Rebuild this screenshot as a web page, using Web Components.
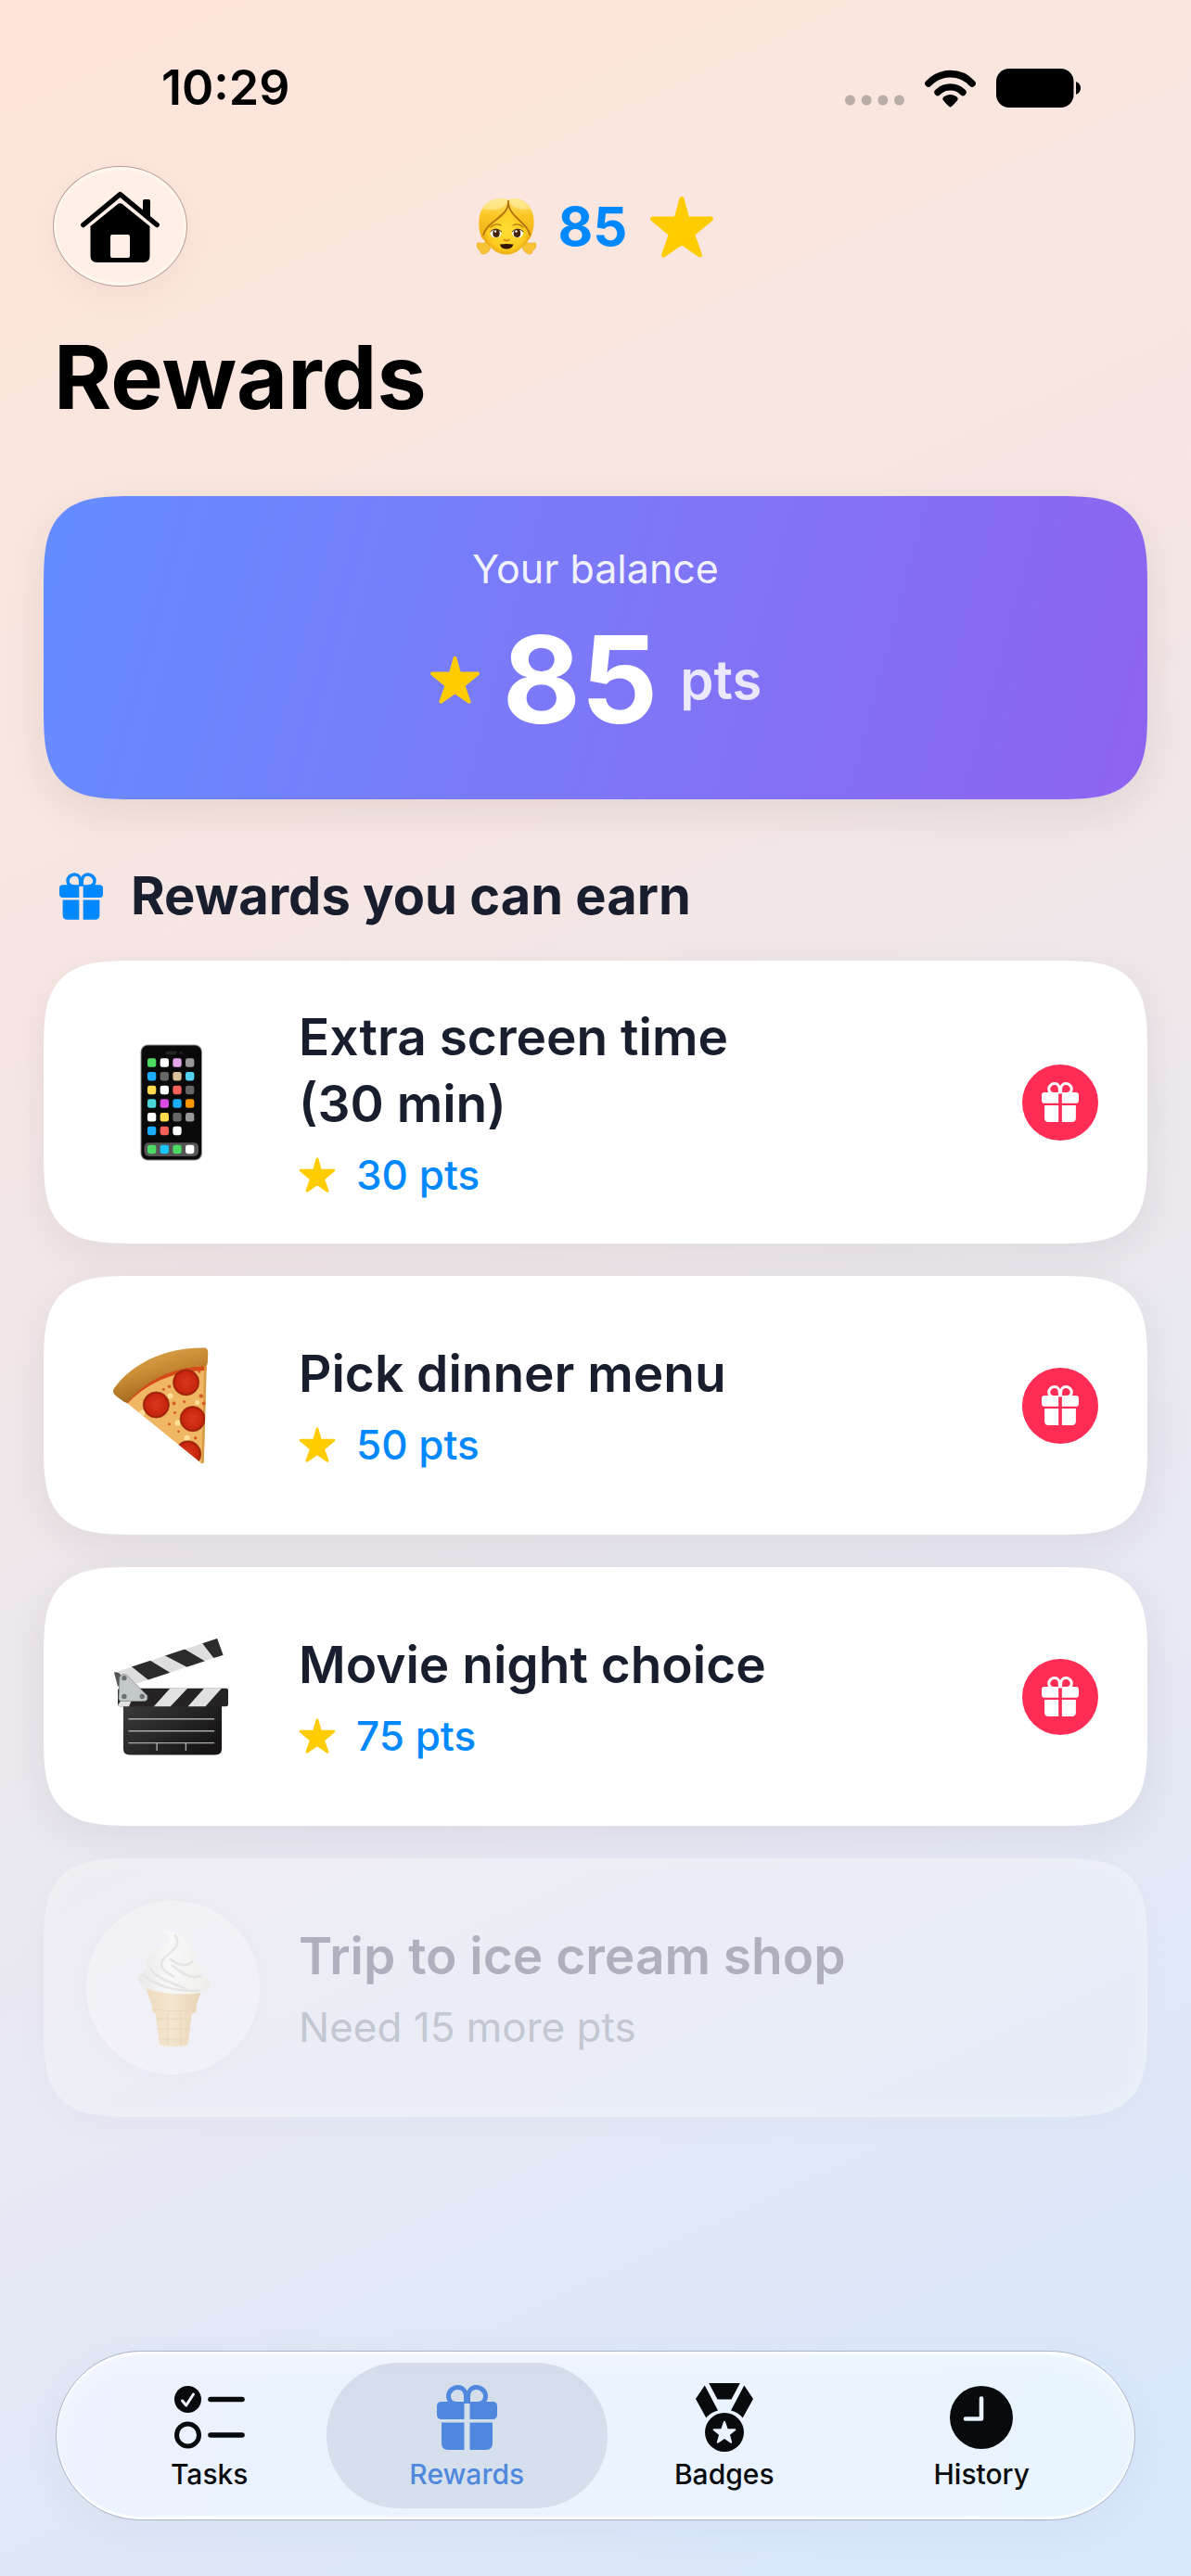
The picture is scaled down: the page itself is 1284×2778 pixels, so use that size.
<!DOCTYPE html>
<html lang="en">
<head>
<meta charset="utf-8">
<meta name="viewport" content="width=device-width, initial-scale=1">
<title>Rewards</title>
<style>
  html { background: #e6e8f3; }
  body {
    margin: 0;
    font-family: Inter, "Liberation Sans", sans-serif;
    color: #191e2e;
    --blue: #0088ff;
    --edge: 47px;
  }
</style>
</head>
<body>
<rewards-app>
  <status-bar slot="status">10:29</status-bar>
  <score-header slot="header">85</score-header>
  <balance-card>
    <span slot="label">Your balance</span>
    <span slot="value">85</span>
    <span slot="unit">pts</span>
  </balance-card>
  <section-title>Rewards you can earn</section-title>
  <reward-card art="phone"><span>Extra screen time<br>(30 min)</span><span slot="cost">30 pts</span></reward-card>
  <reward-card art="pizza"><span>Pick dinner menu</span><span slot="cost">50 pts</span></reward-card>
  <reward-card art="clapper"><span>Movie night choice</span><span slot="cost">75 pts</span></reward-card>
  <reward-card art="cone" locked><span>Trip to ice cream shop</span><span slot="cost">Need 15 more pts</span></reward-card>
  <tab-bar slot="tabs">
    <tab-item icon="tasks">Tasks</tab-item>
    <tab-item icon="gift" selected>Rewards</tab-item>
    <tab-item icon="medal">Badges</tab-item>
    <tab-item icon="clock">History</tab-item>
  </tab-bar>
</rewards-app>

<script>
const phoneApps = () => {
  const rows = [
    ['#4cd964', '#fff', '#e3a4ea', '#999'],
    ['#1badf8', '#666', '#d9bf9a', '#55d3ee'],
    ['#ffdb4d', '#fff', '#f5605a', '#666'],
    ['#4bd5da', '#d94be0', '#1badf8', '#ff9500'],
    ['#fff', '#ffdb4d', '#666', '#999'],
    ['#1badf8', '#f5605a', '#fff']
  ];
  const app = (x, y, c) => `<rect x="${x}" y="${y}" width="9.4" height="9.6" rx="2.4" fill="${c}"/>`;
  return rows.map((r, j) => r.map((c, i) => app(8 + i * 13.8, 15.4 + j * 14.8, c)).join('')).join('')
    + ['#4cd964', '#1bc5f8', '#4cd964', '#fff'].map((c, i) => app(8 + i * 13.8, 109.6, c)).join('');
};

const art = {
  star: ['0 0 70 67', `<path d="M35 3.5 41 25H66.5L46.5 41.5 54.5 64 35 50.5 15.5 64 23.5 41.5 3.5 25H29Z" fill="#ffcc00" stroke="#ffcc00" stroke-width="5" stroke-linejoin="round"/>`],
  gift: ['0 0 65 70', `<g fill="currentColor">
    <path d="M5 18H29.5V37H5Q0 37 0 32V23Q0 18 5 18ZM35.500 18H60Q65 18 65 23V32Q65 37 60 37H35.500Z"/>
    <path d="M5 40.500H29.500V70H12Q5 70 5 63ZM35.500 40.500H60V63Q60 70 53 70H35.500Z"/></g>
    <g fill="none" stroke="currentColor" stroke-width="5"><path d="M31.500 20V13C31.500 7 28 2.500 22.500 2.500S12.500 7 12.500 12 16 20.500 22 20.500"/><path d="M33.500 20V13C33.500 7 37 2.500 42.500 2.500S52.500 7 52.500 12 49 20.500 43 20.500"/></g>`],
  house: ['0 0 85 77', `<path d="M2.800 36.500 42.500 3.500 82.200 36.500" fill="none" stroke="#000" stroke-width="5.500" stroke-linecap="round" stroke-linejoin="round"/>
    <path d="M67 25V11Q67 9 69 9H73Q75 9 75 11V32Z"/>
    <path fill-rule="evenodd" d="M39.500 14.500Q42.500 12 45.500 14.500L74.500 38V70Q74.500 77 67.500 77H17.500Q10.500 77 10.500 70V38ZM32 49V70Q32 72 34 72H51Q53 72 53 70V49Q53 47 51 47H34Q32 47 32 49Z"/>`],
  wifi: ['0 0 55 42', `<path d="M4 16C16.500 2.200 38.500 2.200 51 16" fill="none" stroke="#000" stroke-width="7.600" stroke-linecap="round"/>
    <path d="M14 25.500C21 18 34 18 41 25.500" fill="none" stroke="#000" stroke-width="7.400" stroke-linecap="round"/>
    <path d="M27.500 41.500Q26 41.500 19.700 34Q18.500 31.500 21 30Q27.500 26 34 30Q36.500 31.500 35.300 34Q29 41.500 27.500 41.500Z"/>`],
  battery: ['0 0 91 42', `<rect width="83.500" height="42" rx="14"/><path d="M86 14Q91 16 91 21T86 28Z"/>`],
  dots: ['0 0 64 12', `<g fill="#baaca7"><circle cx="5.500" cy="6" r="5.500"/><circle cx="23.200" cy="6" r="5.500"/><circle cx="40.800" cy="6" r="5.500"/><circle cx="58.500" cy="6" r="5.500"/></g>`],
  tasks: ['0 0 76 68', `<circle cx="14.500" cy="14.500" r="14.500" fill="currentColor"/><path d="M8.500 16 12.700 21 20.500 9" fill="none" stroke="#eef3ff" stroke-width="3" stroke-linecap="round" stroke-linejoin="round"/>
    <g fill="none" stroke="currentColor"><circle cx="14.500" cy="53" r="12" stroke-width="5"/><path d="M39 14.500H73M39 53H73" stroke-width="5.600" stroke-linecap="round"/></g>`],
  medal: ['0 0 62 75', `<g fill="currentColor"><path d="M14.200 0H47.800L38.500 17.500H23.500ZM9.700 2.500 24 29.500Q16 31.500 11.300 37.500L0 17ZM52.300 2.500 38 29.500Q46 31.500 50.700 37.500L62 17Z"/>
    <path fill-rule="evenodd" d="M31 32A21 21 0 1 1 31 74A21 21 0 1 1 31 32ZM30 41.500 27.400 49.200H19.500Q18 50 19 51L25 55.700 22.800 63.700Q23 65.200 24.500 64.500L31 60 37.500 64.500Q39 65.200 39.200 63.700L37 55.700 43 51Q44 50 42.500 49.200H34.600L32 41.500Q31 40 30 41.500Z"/></g>`],
  clock: ['0 0 68 68', `<circle cx="34" cy="34" r="34" fill="currentColor"/><path d="M34 13.500V35.500H17" fill="none" stroke="#e9f2ff" stroke-width="4.600" stroke-linecap="round" stroke-linejoin="round"/>`],
  girl: ['0 0 64 60', `<defs><linearGradient id="h" x2="0" y2="1"><stop stop-color="#ffe27a"/><stop offset=".35" stop-color="#fcc725"/><stop offset="1" stop-color="#e9a511"/></linearGradient>
    <radialGradient id="f" cx=".5" cy=".45" r=".6"><stop stop-color="#ffdf35"/><stop offset=".7" stop-color="#fccb20"/><stop offset="1" stop-color="#e6a012"/></radialGradient></defs>
    <path d="M3 48Q7 49 11 47L15 53Q12 60 7 60 4 60 4 57 0 54 0 50 0 47 3 48ZM61 48Q57 49 53 47L49 53Q52 60 57 60 60 60 60 57 64 54 64 50 64 47 61 48Z" fill="#f8c437" stroke="#e5a51d" stroke-width=".6"/>
    <path d="M34 1.500C26-1 14 0 7 9 1 18 1 31 5 42L13 51H51L58 42C63 31 63 18 57 9 51 0 41-1 34 1.500Z" fill="url(#h)"/>
    <path d="M34 12C31 22 14 26 8 38 11 52 21 60.500 32 60.500S53 52 56.500 38C51 26 37 22 34 12Z" fill="url(#f)"/>
    <path d="M34 2C36 20 10 24 7 40M34 2C33 20 54 24 57.500 40" fill="none" stroke="#b0700f" stroke-width="1.700"/>
    <path d="M6 11C12 1 25-1 33 2 31 12 18 14 6 11ZM35 2C43-1 53 2 58 11 50 13 38 12 35 2Z" fill="#fff3b0" opacity=".5"/>
    <ellipse cx="20.500" cy="37.500" rx="6" ry="4.800" fill="#fff"/><ellipse cx="44" cy="37.500" rx="6" ry="4.800" fill="#fff"/>
    <ellipse cx="21" cy="37.500" rx="3.700" ry="4.500" fill="#432208"/><ellipse cx="43.500" cy="37.500" rx="3.700" ry="4.500" fill="#432208"/>
    <circle cx="20" cy="35.500" r="1.200" fill="#fff"/><circle cx="42.500" cy="35.500" r="1.200" fill="#fff"/>
    <path d="M14.500 36Q20 30 27 36M38 36Q44 30 50.500 36" fill="none" stroke="#4b2709" stroke-width="1"/>
    <path d="M15 31Q20 26 26 29M39 29Q45 26 50 31" fill="none" stroke="#b9780e" stroke-width="1.300" stroke-linecap="round"/>
    <path d="M29.500 44.500Q32 46.500 35 44.500" fill="none" stroke="#d98d10" stroke-width="1.800" stroke-linecap="round"/>
    <path d="M25 49.500Q32 48.500 39.500 49.500 38 54.500 32 54.500T25 49.500Z" fill="#321304"/>`],
  phone: ['2 0 68 127', `<rect x=".5" y=".5" width="67" height="126" rx="8" fill="#8b8b8b"/><rect x="1.500" y="1.500" width="65" height="124" rx="7" fill="#090909"/>
    <rect x="28" y="7.500" width="12" height="4" rx="2" fill="#242424"/><circle cx="44.500" cy="9.500" r="1.600" fill="#242424"/>
    <rect x="4.500" y="107" width="59" height="15" rx="5" fill="#555"/>${phoneApps()}`],
  pizza: ['0 0 127 125', `<defs><clipPath id="s"><path d="M13 58Q42 20 100 18L97 123Q95 126 92 122Z"/></clipPath><linearGradient id="c" x2=".5" y2="1"><stop stop-color="#e3ae57"/><stop offset=".5" stop-color="#c98c35"/><stop offset="1" stop-color="#985d18"/></linearGradient>
    <radialGradient id="p"><stop stop-color="#d7391b"/><stop offset=".8" stop-color="#c9260f"/><stop offset="1" stop-color="#8d1b0b"/></radialGradient></defs>
    <g clip-path="url(#s)"><path d="M0 0H102V125H0Z" fill="#efb763"/><path d="M10 62Q44 23 102 22" fill="none" stroke="#d44a19" stroke-width="5"/><path d="M99 18 96 125" stroke="#d69b45" stroke-width="3"/>
      <g fill="#d65c27"><circle cx="60" cy="42" r="1.800"/><circle cx="65" cy="60" r="2"/><circle cx="94" cy="52" r="2.200"/><circle cx="60" cy="82" r="1.500"/><circle cx="70" cy="90" r="1.300"/><circle cx="88" cy="97" r="1.700"/><circle cx="76" cy="58" r="1.500"/><circle cx="97" cy="60" r="2"/><circle cx="66" cy="70" r="1.500"/><circle cx="54" cy="45" r="1.500"/><circle cx="92" cy="26" r="1.500"/></g>
      <g fill="#ffe09a"><circle cx="61" cy="52" r="3"/><circle cx="69" cy="81" r="3"/><circle cx="90" cy="59" r="2.500"/><circle cx="31" cy="70" r="3"/><circle cx="79" cy="97" r="3"/></g>
      <g fill="url(#p)" stroke="#a8380f" stroke-width=".8"><circle cx="78" cy="37.500" r="14"/><circle cx="46" cy="61.500" r="14"/><circle cx="85" cy="76.500" r="13.500"/><circle cx="80" cy="114" r="14"/></g></g>
    <path d="M97 .5Q101 0 101.500 5L101 16Q101 20 97 20C65 21 37 34 17 57Q14 61 10 57 5 54 1 50-1 47 1 44C20 17 56 0 97 .5Z" fill="url(#c)"/>`],
  clapper: ['2 0 124 127', `<defs><clipPath id="a"><path d="M112 0 118.500 18 25 49 0 37Z"/></clipPath><clipPath id="b"><rect x="4" y="54" width="120" height="20" rx="2.500"/></clipPath><linearGradient id="k" x2="1" y2=".6"><stop stop-color="#3b3a3b"/><stop offset="1" stop-color="#171515"/></linearGradient></defs>
    <g clip-path="url(#a)"><path d="M0 0H124V60H0Z" fill="#dedede"/><path d="M92 0H124V20L108 21ZM54 18 74 10 101 26 83 33ZM17 29 36 22 64 39 42 49ZM0 36 6 38V50H0Z" fill="#2b2b2b"/></g>
    <path d="M0 37 7 39 12 52H4Z" fill="#555"/>
    <path d="M10 72H117V120Q117 126.500 110 126.500H17Q10 126.500 10 120Z" fill="url(#k)"/>
    <g clip-path="url(#b)"><path d="M4 54H124V74H4Z" fill="#252323"/><path d="M3 74 16 54H25L16 74ZM43 74 61 54H80L61 74ZM80 74 98 54H117L99 74Z" fill="#e1e1e1"/></g>
    <path d="M15.500 87.500H109M15.500 100.500H109M15.500 113.500H109M46.500 113.500V122M78 113.500V122" stroke="#aaa" stroke-width="1.400"/>
    <path d="M6 42Q9 37 14 40L36 62Q37 68 33 68H8Q5 68 5 65Z" fill="#c3c8cb" stroke="#83898c" stroke-width=".8"/><g fill="#6b6f72"><circle cx="11" cy="43" r="2.700"/><circle cx="11" cy="63" r="2.700"/><circle cx="30.500" cy="63" r="2.700"/></g>`],
  cone: ['-1 0 78 127', `<defs><linearGradient id="w"><stop stop-color="#efc789"/><stop offset=".45" stop-color="#f7dda9"/><stop offset="1" stop-color="#e3b473"/></linearGradient><linearGradient id="i"><stop stop-color="#e6e4dc"/><stop offset=".45" stop-color="#fffffb"/><stop offset="1" stop-color="#eeece2"/></linearGradient></defs>
    <path d="M8 62H70L63 83V89L58 92 54 124Q53 127 39 127T23 124L19 92 15 88V83Z" fill="url(#w)"/><path d="M15 86Q39 91 63 86M20 97H58M21 108H57M23 119H55M32 91V125M46 91V125" fill="none" stroke="#e3bd85" stroke-width="1"/>
    <path d="M26 2C30-1 37 0 42 4 58 12 65 24 60 34 69 37 71 45 68 49 80 53 80 63 71 67 63 72 22 70 9 64 0 60-2 52 4 47 9 45 8 43 9 40 7 28 17 23 26 18 36 14 38 6 26 2Z" fill="url(#i)"/>
    <path d="M40 6C49 20 32 25 27 32 22 40 28 46 39 51M59 35C52 41 42 38 35 32M68 50C57 55 48 47 37 39M5 49C16 58 36 68 66 66M13 42C20 54 42 59 53 65" fill="none" stroke="#dddbd0" stroke-width="2.500" stroke-linecap="round"/>`]
};

const icon = (name, cls = '') => `<svg class="${cls}" viewBox="${art[name][0]}" aria-hidden="true">${art[name][1]}</svg>`;

class Base extends HTMLElement {
  connectedCallback() {
    if (this.shadowRoot) return;
    this.attachShadow({ mode: 'open' }).innerHTML =
      `<style>*{box-sizing:border-box}:host{display:block;box-sizing:border-box}svg{display:block;flex:none;overflow:visible}${this.css()}</style>${this.html()}`;
  }
}

customElements.define('rewards-app', class extends Base {
  css() { return `
    :host { display: flex; flex-direction: column; min-height: 100vh;
      background: linear-gradient(155deg, #ffe4d9 0%, #fae6de 14%, #f5e6e4 34%, #eee7ea 48%, #e7e8f3 68%, #dfe8f7 84%, #d9e8fd 100%); }
    h1 { margin: 40px 0 70px; padding: 0 58px; font-size: 95px; line-height: 116px; font-weight: 700; color: #000; }
    main { display: flex; flex-direction: column; gap: 35px; padding: 0 var(--edge) 60px; }
    footer { margin-top: auto; padding: 0 60px 60px; }`; }
  html() { return `<slot name="status"></slot><slot name="header"></slot><h1>Rewards</h1><main><slot></slot></main><footer><slot name="tabs"></slot></footer>`; }
});

customElements.define('status-bar', class extends Base {
  css() { return `
    :host { display: flex; justify-content: space-between; align-items: center; padding: 60px 119px 49px 174px; color: #000; }
    time { font-size: 52px; line-height: 70px; font-weight: 600; }
    div { display: flex; align-items: center; gap: 22px; height: 42px; }
    .dots { width: 64px; height: 12px; align-self: flex-end; margin-bottom: 2px; }
    .wifi { width: 55px; height: 42px; }
    .battery { width: 91px; height: 42px; }`; }
  html() { return `<time><slot></slot></time><div>${icon('dots', 'dots')}${icon('wifi', 'wifi')}${icon('battery', 'battery')}</div>`; }
});

customElements.define('score-header', class extends Base {
  css() { return `
    :host { display: grid; grid-template-columns: 1fr auto 1fr; align-items: center; padding: 0 57px; }
    button { width: 145px; height: 130px; padding: 0; display: grid; place-items: center; cursor: pointer;
      border: 1px solid #b89e96; border-radius: 72px / 65px; background: #ffefe7;
      box-shadow: inset 0 2px 4px #fffdf6, inset 0 -2px 4px #fffdf6, 0 12px 32px rgba(120, 70, 50, .05); }
    button svg { width: 85px; height: 77px; }
    .score { display: flex; align-items: center; gap: 24px; font-size: 58px; line-height: 68px; font-weight: 700; color: var(--blue); }
    .girl { width: 64px; height: 60px; }
    .star { width: 70px; height: 67px; }`; }
  html() { return `<button type="button" aria-label="Home">${icon('house')}</button><div class="score">${icon('girl', 'girl')}<slot></slot>${icon('star', 'star')}</div>`; }
});

const squircle = `border-radius: 66px;`;
const squircleUp = (sel) => `@supports (corner-shape: squircle) { ${sel} { border-radius: 100px; corner-shape: superellipse(1.7); } }`;

customElements.define('balance-card', class extends Base {
  css() { return `
    :host { display: flex; flex-direction: column; align-items: center; gap: 16px; padding: 52px 40px; ${squircle}
      background: linear-gradient(105deg, #658cff 3%, #7a7bf9 42%, #8d64f0 100%); color: #fff;
      box-shadow: 0 14px 44px rgba(60, 40, 30, .09); }
    .label { font-size: 43px; line-height: 52px; font-weight: 400; color: rgba(255, 255, 255, .92); }
    .row { display: flex; align-items: center; gap: 24px; }
    .value { font-size: 130px; line-height: 155px; font-weight: 700; }
    .unit { font-size: 58px; line-height: 68px; font-weight: 600; color: rgba(255, 255, 255, .84); }
    .star { width: 55px; height: 52px; } ${squircleUp(':host')}`; }
  html() { return `<div class="label"><slot name="label"></slot></div><div class="row">${icon('star', 'star')}<span class="value"><slot name="value"></slot></span><span class="unit"><slot name="unit"></slot></span></div>`; }
});

customElements.define('section-title', class extends Base {
  css() { return `
    :host { margin-top: 35px; padding-left: 17px; }
    h2 { display: flex; align-items: center; gap: 30px; margin: 0; font-size: 56px; line-height: 69px; font-weight: 700; }
    svg { width: 47px; height: 51px; color: var(--blue); }`; }
  html() { return `<h2>${icon('gift')}<slot></slot></h2>`; }
});

customElements.define('reward-card', class extends Base {
  css() { return `
    :host { display: flex; align-items: center; gap: 42px; padding: 46px 53px 46px 46px; background: #fff; ${squircle}
      box-shadow: 0 12px 42px rgba(50, 40, 60, .07); }
    .art { display: grid; place-items: center; width: 187px; height: 187px; flex: none; border-radius: 50%; }
    .art svg { height: 126px; }
    .text { flex: 1; min-width: 0; display: flex; flex-direction: column; gap: 13px; }
    .name { font-size: 55px; line-height: 72px; font-weight: 600; }
    .cost { display: flex; align-items: center; gap: 22px; font-size: 44px; line-height: 56px; font-weight: 500; color: var(--blue); }
    .cost svg { width: 40px; height: 38px; }
    button { display: grid; place-items: center; width: 82px; height: 82px; padding: 0; border: 0; border-radius: 50%; background: #ff2d55; color: #fff; cursor: pointer; }
    button svg { width: 40px; height: 43px; }
    :host([locked]) { color: #aeb1bd; background: rgba(255, 255, 255, .22);
      box-shadow: inset 0 0 24px rgba(255, 255, 255, .3), 0 10px 40px rgba(50, 60, 100, .02); }
    :host([locked]) .art { background: rgba(255, 255, 255, .22); box-shadow: inset 0 0 14px rgba(255, 255, 255, .3), 0 4px 24px rgba(50, 60, 100, .02); }
    :host([locked]) .art svg { opacity: .5; }
    :host([locked]) .cost { color: #c3c7d1; font-weight: 400; } ${squircleUp(':host')}`; }
  html() {
    const locked = this.hasAttribute('locked');
    return `<div class="art">${icon(this.getAttribute('art'))}</div>
      <div class="text"><div class="name"><slot></slot></div><div class="cost">${locked ? '' : icon('star')}<slot name="cost"></slot></div></div>
      ${locked ? '' : `<button type="button" aria-label="Redeem">${icon('gift')}</button>`}`;
  }
});

customElements.define('tab-bar', class extends Base {
  css() { return `
    nav { display: flex; height: 183px; padding: 12px 26px; border: 1px solid #a9b4c9; border-radius: 92px;
      background: linear-gradient(100deg, #ecf2ff 0%, #ebf3ff 45%, #e8f4ff 100%);
      box-shadow: inset 0 3px 2px #fff, inset 0 -3px 2px #fff, inset 0 12px 26px rgba(255, 255, 255, .35), 0 10px 40px rgba(60, 80, 140, .06); }`; }
  html() { return `<nav><slot></slot></nav>`; }
});

customElements.define('tab-item', class extends Base {
  css() { return `
    :host { flex: 1; }
    a { position: relative; isolation: isolate; display: flex; flex-direction: column; align-items: center; height: 100%; padding-top: 21px; gap: 5px;
      font-size: 30px; line-height: 36px; font-weight: 500; color: #080b0e; text-decoration: none; }
    .glyph { display: grid; place-items: center; height: 76px; }
    .tasks { width: 76px; height: 68px; } .gift { width: 65px; height: 70px; } .medal { width: 62px; height: 75px; } .clock { width: 68px; height: 68px; }
    :host([selected]) a { color: #5088de; }
    :host([selected]) a::before { content: ""; position: absolute; z-index: -1; inset: 0 -13px; border-radius: 78px; background: linear-gradient(#d5dbea, #d5e0ec 45%); }`; }
  html() {
    const name = this.getAttribute('icon');
    return `<a href="#${name}"><span class="glyph">${icon(name, name)}</span><slot></slot></a>`;
  }
});
</script>
</body>
</html>
